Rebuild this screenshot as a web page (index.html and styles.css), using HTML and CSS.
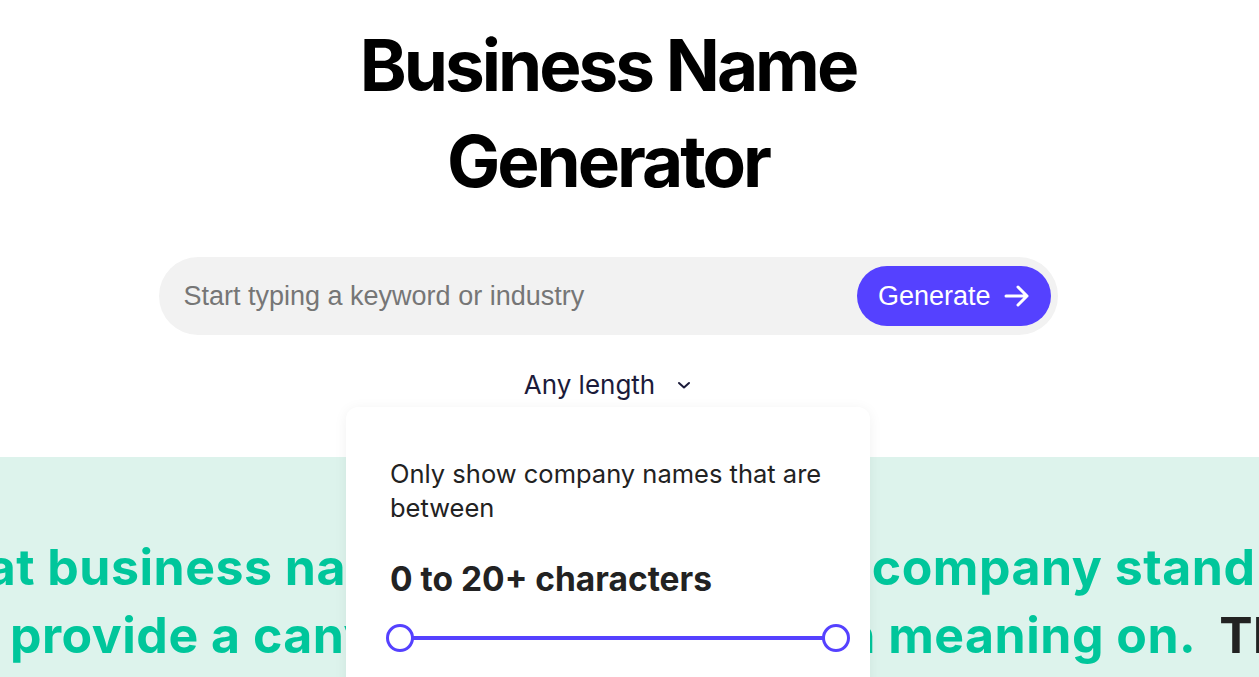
FILE: index.html
```html
<!DOCTYPE html>
<html lang="en">
<head>
  <meta charset="UTF-8">
  <title>Business Name Generator</title>
  <link rel="stylesheet" href="styles.css">
</head>
<body>

<div class="hero">
  <h1>Business Name<br>Generator</h1>

  <form class="search" onsubmit="return false">
    <input type="text" placeholder="Start typing a keyword or industry">
    <button type="submit">Generate
      <svg width="26" height="22" viewBox="0 0 26 22" fill="none" stroke="#fff" stroke-width="3" stroke-linecap="round" stroke-linejoin="round">
        <path d="M2 11h21M14 2l9 9-9 9"/>
      </svg>
    </button>
  </form>

  <div class="length">
    <button class="length-toggle">Any length
      <svg width="16" height="10" viewBox="0 0 16 10" fill="none" stroke="#1b1b3a" stroke-width="2" stroke-linecap="round" stroke-linejoin="round">
        <path d="M3 3l5 4.5 5-4.5"/>
      </svg>
    </button>

    <div class="length-menu">
      <p class="menu-label">Only show company names that are between</p>
      <p class="menu-value">0 to 20+ characters</p>
      <div class="slider">
        <span class="track"></span>
        <span class="handle"></span>
        <span class="handle"></span>
      </div>
    </div>
  </div>
</div>

<section class="intro">
  <p class="intro-line one">A great business name will help get your company stand out</p>
  <p class="intro-line two">It will provide a canvas to write your own meaning on. <span class="dark">The right name</span></p>
</section>

</body>
</html>
```

FILE: styles.css
```css
html, body {
  margin: 0;
  background: #fff;
  overflow: hidden;
  font-family: Inter, 'Noto Sans', sans-serif;
  color: #111;
}
.hero {
  display: flex;
  flex-direction: column;
  align-items: center;
  padding: 17px 43px 0 0;
}
h1 {
  margin: 0;
  font-size: 71px;
  line-height: 96px;
  font-weight: 700;
  letter-spacing: -3px;
  text-align: center;
  color: #000;
}
.search {
  display: flex;
  align-items: center;
  justify-content: space-between;
  box-sizing: border-box;
  width: 899px;
  height: 78px;
  margin-top: 48px;
  padding: 0 7px 0 23px;
  background: #f2f2f2;
  border-radius: 39px;
}
.search input {
  flex: 1;
  border: none;
  background: none;
  outline: none;
  font: 27px 'Liberation Sans', Arial, sans-serif;
  color: #333;
}
.search input::placeholder {
  color: #767676;
}
.search button {
  display: flex;
  align-items: center;
  gap: 13px;
  height: 60px;
  padding: 0 21px 0 21px;
  border: none;
  border-radius: 30px;
  background: #5541ff;
  color: #fff;
  font: 27px 'Liberation Sans', Arial, sans-serif;
  cursor: pointer;
}
.length {
  position: relative;
  margin-top: 34px;
}
.length-toggle {
  display: flex;
  align-items: center;
  gap: 21px;
  border: none;
  background: none;
  padding: 0;
  font-family: Inter, sans-serif;
  font-size: 26px;
  color: #1b1b3a;
  cursor: pointer;
}
.length-menu {
  position: absolute;
  top: 38px;
  left: 50%;
  transform: translateX(-50%);
  z-index: 10;
  box-sizing: border-box;
  width: 524px;
  height: 320px;
  padding: 50px 44px 0;
  background: #fff;
  border-radius: 12px;
  box-shadow: 0 2px 14px rgba(0, 0, 0, 0.06);
}
.menu-label {
  margin: 0;
  font-size: 25.5px;
  line-height: 34px;
  color: #222;
}
.menu-value {
  margin: 34px 0 0;
  font-size: 33.5px;
  font-weight: 700;
  color: #222;
}
.slider {
  position: relative;
  height: 30px;
  margin: 24px 0 0 -4px;
  width: 464px;
}
.track {
  position: absolute;
  left: 14px;
  right: 14px;
  top: 13px;
  height: 4px;
  background: #5541ff;
}
.handle {
  position: absolute;
  top: 1px;
  left: 0;
  width: 22px;
  height: 22px;
  border: 3px solid #5541ff;
  border-radius: 50%;
  background: #fff;
}
.handle + .handle {
  left: auto;
  right: 0;
}
.intro {
  margin-top: 57px;
  height: 230px;
  padding-top: 76px;
  box-sizing: border-box;
  background: #ddf3ec;
  overflow: hidden;
}
.intro-line {
  margin: 0;
  white-space: nowrap;
  font-size: 50px;
  line-height: 68px;
  font-weight: 700;
  letter-spacing: 0.5px;
  color: #00c69b;
}
.intro-line.one {
  margin-left: -146px;
}
.intro-line.two {
  margin-left: -134px;
}
.dark {
  margin-left: 12px;
  color: #222;
}
```
